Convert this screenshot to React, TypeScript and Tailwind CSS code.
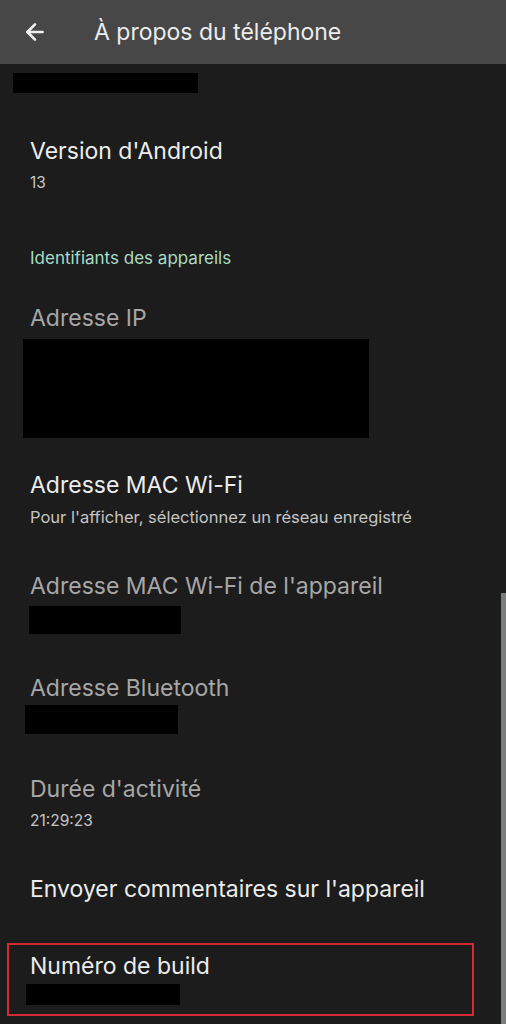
import { ArrowLeft } from 'lucide-react';

const font = { fontFamily: 'Inter, Roboto, sans-serif' };

function Redact({ className }: { className: string }) {
  return <div className={`bg-black ${className}`} />;
}

export default function App() {
  return (
    <div className="relative h-[1024px] w-[506px] overflow-hidden bg-[#1c1c1c]" style={font}>
      <header className="flex h-16 items-center bg-[#474747]">
        <ArrowLeft className="ml-[22px] h-[26px] w-[26px] text-[#f0f0f0]" strokeWidth={2.4} />
        <h1 className="ml-[46px] text-[23px] text-[#ececec]">À propos du téléphone</h1>
      </header>

      <Redact className="ml-[13px] mt-[9px] h-5 w-[185px]" />

      <div className="mt-[42px] pl-[30px]">
        <p className="text-[23px] leading-8 text-[#ececec]">Version d'Android</p>
        <p className="mt-[6px] text-[15.5px] leading-5 text-[#c4c4c4]">13</p>
      </div>

      <p className="mt-[54px] pl-[30px] text-[17px] leading-[22px] text-[#a8dcc4]">Identifiants des appareils</p>

      <div className="mt-[33px]">
        <p className="pl-[30px] text-[23px] leading-8 text-[#a7a7a7]">Adresse IP</p>
        <Redact className="ml-[23px] mt-[5px] h-[99px] w-[346px]" />
      </div>

      <div className="mt-[31px] pl-[30px]">
        <p className="text-[23px] leading-8 text-[#ececec]">Adresse MAC Wi-Fi</p>
        <p className="mt-[6px] text-[16.5px] leading-5 text-[#c4c4c4]">Pour l'afficher, sélectionnez un réseau enregistré</p>
      </div>

      <div className="mt-[43px]">
        <p className="pl-[30px] text-[23px] leading-8 text-[#a7a7a7]">Adresse MAC Wi-Fi de l'appareil</p>
        <Redact className="ml-[29px] mt-[4px] h-[28px] w-[152px]" />
      </div>

      <div className="mt-[38px]">
        <p className="pl-[30px] text-[23px] leading-8 text-[#a7a7a7]">Adresse Bluetooth</p>
        <Redact className="ml-[25px] mt-[1px] h-[29px] w-[153px]" />
      </div>

      <div className="mt-[39px] pl-[30px]">
        <p className="text-[23px] leading-8 text-[#a7a7a7]">Durée d'activité</p>
        <p className="mt-[6px] text-[15.5px] leading-5 text-[#c4c4c4]">21:29:23</p>
      </div>

      <p className="mt-[42px] pl-[30px] text-[23px] leading-8 text-[#ececec]">Envoyer commentaires sur l'appareil</p>

      <div className="ml-[7px] mt-[38px] h-[73px] w-[467px] border-2 border-[#d42a36] pt-[5px]">
        <p className="pl-[21px] text-[23px] leading-8 text-[#ececec]">Numéro de build</p>
        <Redact className="ml-[17px] mt-[2px] h-[21px] w-[154px]" />
      </div>

      <div className="absolute right-0 top-[593px] h-[431px] w-[5px] bg-[#7b7d7c]" />
    </div>
  );
}
